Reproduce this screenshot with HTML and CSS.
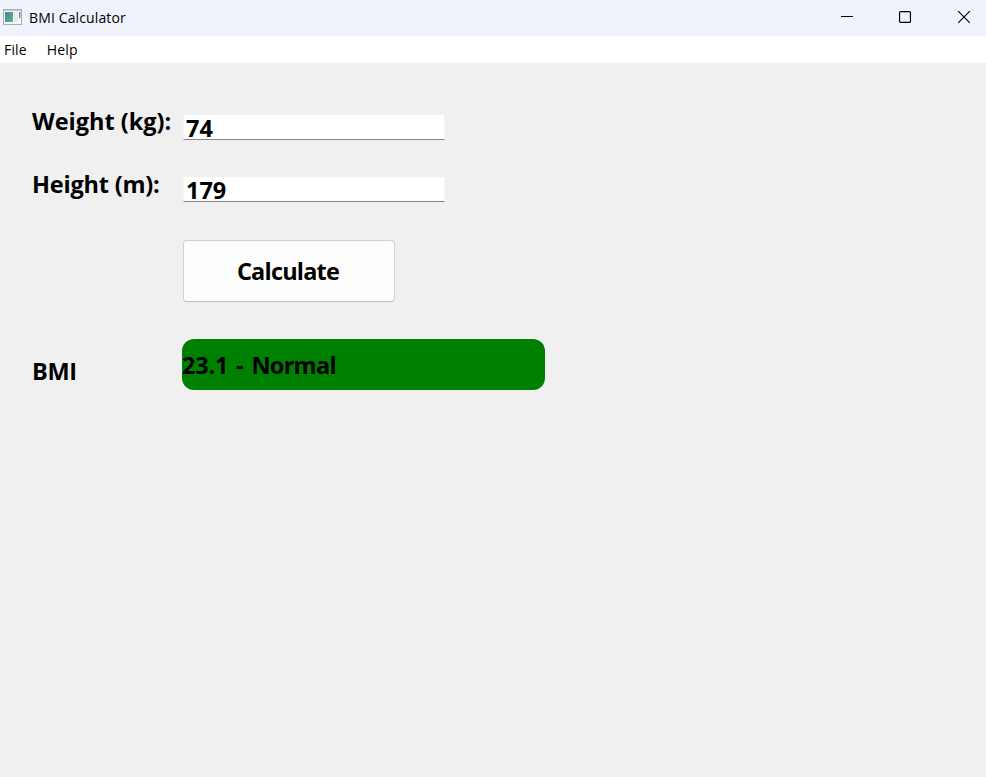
FILE: index.html
```html
<!DOCTYPE html>
<html lang="en">
<head>
<meta charset="utf-8">
<title>BMI Calculator</title>
<link rel="stylesheet" href="styles.css">
</head>
<body>
<header class="titlebar">
  <svg class="app-icon" width="19" height="16" viewBox="0 0 19 16">
    <defs><linearGradient id="g" x1="0" y1="0" x2="1" y2="1"><stop offset="0" stop-color="#4a7cae"/><stop offset="1" stop-color="#5fb97c"/></linearGradient></defs>
    <rect x=".5" y=".5" width="18" height="15" fill="#f8f8f8" stroke="#a9acb0"/>
    <path d="M1 1.5h17" stroke="#c4c6ca"/>
    <rect x="2" y="3" width="8" height="10" fill="url(#g)"/>
    <rect x="11" y="3" width="4" height="10" fill="#e9ebeb"/>
    <rect x="16" y="3" width="1.5" height="6" fill="url(#g)"/>
  </svg>
  <span class="title">BMI Calculator</span>
  <div class="controls">
    <svg width="14" height="14" viewBox="0 0 14 14"><path d="M2 6.5h12" stroke="#000"/></svg>
    <svg width="14" height="14" viewBox="0 0 14 14"><rect x="1.55" y="1.55" width="10.9" height="10.9" rx="1" fill="none" stroke="#000" stroke-width="1.2"/></svg>
    <svg width="14" height="14" viewBox="0 0 14 14"><path d="M1.2 1.2 12.8 12.8M12.8 1.2 1.2 12.8" stroke="#000" stroke-width="1.15"/></svg>
  </div>
</header>
<nav class="menubar"><span>File</span><span class="menu-help">Help</span></nav>
<main class="form">
  <label class="label weight" for="weight">Weight (kg):</label>
  <input class="field" id="weight" value="74">
  <label class="label height" for="height">Height (m):</label>
  <input class="field" id="height" value="179">
  <button class="calculate">Calculate</button>
  <span class="label bmi">BMI</span>
  <output class="result">23.1 - <span class="category">Normal</span></output>
</main>
</body>
</html>
```
FILE: styles.css
```css
* { box-sizing: border-box; }
body {
  margin: 0;
  height: 100vh;
  overflow: hidden;
  background: #f0f0f0;
  color: #000;
  font-family: "Open Sans", "Noto Sans", sans-serif;
}
.titlebar {
  display: flex;
  align-items: center;
  height: 36px;
  padding: 0 15px 0 3px;
  background: #eff3fb;
  font-size: 14px;
}
.app-icon { margin: 0 7px 2px 0; }
.title {
  margin-bottom: 2px;
  letter-spacing: 0.13px;
}
.controls {
  display: flex;
  gap: 45px;
  margin: 0 0 2px auto;
}
.controls svg { display: block; }
.menubar {
  display: flex;
  align-items: center;
  gap: 20px;
  height: 27px;
  padding-left: 4px;
  background: #fff;
  font-size: 14px;
  letter-spacing: 0.15px;
}
.form {
  display: grid;
  grid-template-columns: 151px 363px;
  grid-template-rows: 25px 25px 62px 51px;
  row-gap: 37px;
  padding: 52px 0 0 32px;
}
.label {
  font-size: 23.5px;
  font-weight: 700;
  line-height: 32px;
  white-space: nowrap;
}
.weight { margin-top: -10px; }
.height {
  margin-top: -9px;
  letter-spacing: -0.2px;
}
.bmi {
  margin-top: 17px;
  letter-spacing: -0.3px;
}
.field {
  width: 262px;
  height: 25px;
  padding: 2px 2px 0;
  border: 0 solid #f6f6f6;
  border-width: 0 1px 1px;
  border-bottom-color: #868686;
  border-radius: 0;
  outline: none;
  background: #fff;
  color: #000;
  font: 700 23.5px/22px "Open Sans", "Noto Sans", sans-serif;
}
.calculate {
  grid-column: 2;
  width: 212px;
  height: 62px;
  margin-top: 1px;
  padding: 0 2px 0 0;
  border: 1px solid #d0d0d0;
  border-bottom-color: #bbb;
  border-radius: 4px;
  background: #fdfdfd;
  color: #000;
  font: 700 23.5px/32px "Open Sans", "Noto Sans", sans-serif;
  letter-spacing: -0.8px;
}
.result {
  width: 363px;
  height: 51px;
  margin: 1px 0 0 -1px;
  border-radius: 12px;
  background: #008000;
  font-size: 23.5px;
  font-weight: 700;
  line-height: 53px;
  letter-spacing: -0.2px;
  word-spacing: 2px;
  white-space: nowrap;
}
.category { letter-spacing: -0.7px; }
```
